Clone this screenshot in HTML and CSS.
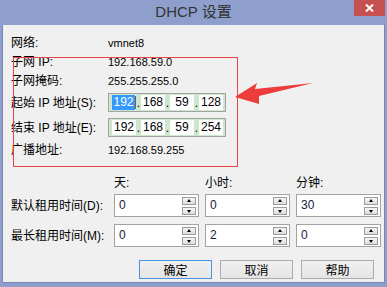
FILE: index.html
```html
<!DOCTYPE html>
<html lang="zh-CN">
<head>
    <meta charset="UTF-8">
    <title>DHCP 设置</title>
    <link rel="stylesheet" href="styles.css">
</head>
<body>

<div class="frame">
    <div class="titlebar">
        <span></span>
        <span class="title">DHCP 设置</span>
        <button class="close" type="button">
            <svg width="9" height="8" viewBox="0 0 9 8"><path d="M1 0.5 L8 7.5 M8 0.5 L1 7.5" stroke="#fff" stroke-width="2"/></svg>
        </button>
    </div>

    <div class="client">
        <div class="info">
            <div class="row"><span class="label">网络:</span><span class="value">vmnet8</span></div>
            <div class="row"><span class="label">子网 IP:</span><span class="value">192.168.59.0</span></div>
            <div class="row"><span class="label">子网掩码:</span><span class="value">255.255.255.0</span></div>
            <div class="row ip">
                <span class="label">起始 IP 地址(S):</span>
                <div class="ipbox">
                    <span class="seg"><span class="sel">192</span><span class="caret"></span></span><span class="dot">.</span>
                    <span class="seg">168</span><span class="dot">.</span>
                    <span class="seg">59</span><span class="dot">.</span>
                    <span class="seg">128</span>
                </div>
            </div>
            <div class="row ip">
                <span class="label">结束 IP 地址(E):</span>
                <div class="ipbox">
                    <span class="seg">192</span><span class="dot">.</span>
                    <span class="seg">168</span><span class="dot">.</span>
                    <span class="seg">59</span><span class="dot">.</span>
                    <span class="seg">254</span>
                </div>
            </div>
            <div class="row"><span class="label">广播地址:</span><span class="value">192.168.59.255</span></div>
        </div>

        <div class="lease">
            <span></span>
            <span class="head">天:</span>
            <span class="head">小时:</span>
            <span class="head">分钟:</span>

            <span class="label">默认租用时间(D):</span>
            <div class="spin"><span class="num">0</span><div class="arrows"><span class="up"></span><span class="down"></span></div></div>
            <div class="spin"><span class="num">0</span><div class="arrows"><span class="up"></span><span class="down"></span></div></div>
            <div class="spin"><span class="num">30</span><div class="arrows"><span class="up"></span><span class="down"></span></div></div>

            <span class="label">最长租用时间(M):</span>
            <div class="spin"><span class="num">0</span><div class="arrows"><span class="up"></span><span class="down"></span></div></div>
            <div class="spin"><span class="num">2</span><div class="arrows"><span class="up"></span><span class="down"></span></div></div>
            <div class="spin"><span class="num">0</span><div class="arrows"><span class="up"></span><span class="down"></span></div></div>
        </div>

        <div class="actions">
            <button class="btn default" type="button">确定</button>
            <button class="btn" type="button">取消</button>
            <button class="btn" type="button">帮助</button>
        </div>

        <!-- annotation drawn over the screenshot -->
        <div class="mark"></div>
        <svg class="arrow" width="80" height="24" viewBox="0 0 80 24">
            <polygon points="0,14 22,0 20,6 78,0 24,13 24,21" fill="#ee3b3b"/>
        </svg>
    </div>
</div>

</body>
</html>
```

FILE: styles.css
```css
body {
    margin: 0;
    width: 387px;
    height: 287px;
    overflow: hidden;
    background-color: #8e9fcd;
    font-family: "Liberation Sans", "Noto Sans CJK SC", sans-serif;
    font-size: 12px;
    line-height: 16px;
    color: #000;
}
.frame {
    display: flex;
    flex-direction: column;
}
.titlebar {
    height: 25px;
    display: grid;
    grid-template-columns: 1fr auto 1fr;
}
.title {
    align-self: center;
    font-size: 15px;
    color: #333;
    padding-bottom: 2px;
}
.close {
    justify-self: end;
    align-self: start;
    width: 31px;
    height: 16px;
    margin-right: 2px;
    padding: 0;
    border: none;
    background-color: #c75050;
    display: flex;
    align-items: center;
    justify-content: center;
}
.client {
    position: relative;
    margin: 0 2px;
    height: 258px;
    border: 1px solid #7886b6;
    border-top: none;
    background-color: #f0f0f0;
    padding: 8px 0 0 8px;
    box-sizing: border-box;
}
.row {
    height: 19px;
    display: flex;
    align-items: center;
}
.row.ip {
    height: 25px;
}
.label {
    width: 97px;
    flex: none;
    white-space: nowrap;
}
.value {
    font-size: 11px;
}
.ipbox {
    width: 118px;
    height: 19px;
    box-sizing: border-box;
    border: 1px solid #a3a3a3;
    background-color: #cde6cd;
    display: flex;
    align-items: center;
    padding-left: 3px;
    font-size: 12px;
}
.seg {
    width: 24px;
    height: 15px;
    line-height: 15px;
    background-color: #fff;
    text-align: center;
    display: flex;
    justify-content: center;
    align-items: center;
}
.sel {
    background-color: #3399ff;
    color: #fff;
    padding: 0 1px;
}
.caret {
    width: 1px;
    height: 13px;
    background-color: #8a5a20;
}
.dot {
    width: 5px;
    text-align: center;
}
.lease {
    display: grid;
    grid-template-columns: 97px 85px 85px 85px;
    grid-template-rows: 16px 23px 23px;
    column-gap: 6px;
    row-gap: 7px;
    margin-top: 12px;
    align-items: center;
}
.lease .head {
    margin-bottom: -7px;
}
.spin {
    height: 23px;
    box-sizing: border-box;
    border: 1px solid #a3a3a3;
    background-color: #fff;
    display: flex;
    align-items: center;
    justify-content: space-between;
    padding: 0 2px 0 4px;
}
.num {
    font-size: 12px;
    color: #1a1a40;
    margin-top: -2px;
}
.arrows {
    display: flex;
    flex-direction: column;
    gap: 2px;
}
.arrows span {
    width: 14px;
    height: 8px;
    box-sizing: border-box;
    border: 1px solid #9c9c9c;
    background: linear-gradient(#f6f6f6, #dddddd);
    position: relative;
}
.arrows span::after {
    content: "";
    position: absolute;
    left: 4px;
    top: 1px;
    border-left: 2.5px solid transparent;
    border-right: 2.5px solid transparent;
}
.arrows .up::after {
    border-bottom: 3px solid #000;
}
.arrows .down::after {
    top: 2px;
    border-top: 3px solid #000;
}
.actions {
    display: flex;
    justify-content: flex-end;
    gap: 8px;
    padding-right: 10px;
    margin-top: 13px;
}
.btn {
    width: 73px;
    height: 19px;
    padding: 0;
    border: 1px solid #acacac;
    background: linear-gradient(#f0f0f0, #e5e5e5);
    font-family: "Noto Sans CJK SC", sans-serif;
    font-size: 12px;
    line-height: 15px;
    color: #000;
}
.btn.default {
    border-color: #4a93e0;
}
.mark {
    position: absolute;
    left: 10px;
    top: 32px;
    width: 225px;
    height: 110px;
    border: 1px solid #e84545;
    box-sizing: border-box;
}
.arrow {
    position: absolute;
    left: 232px;
    top: 58px;
}
```
